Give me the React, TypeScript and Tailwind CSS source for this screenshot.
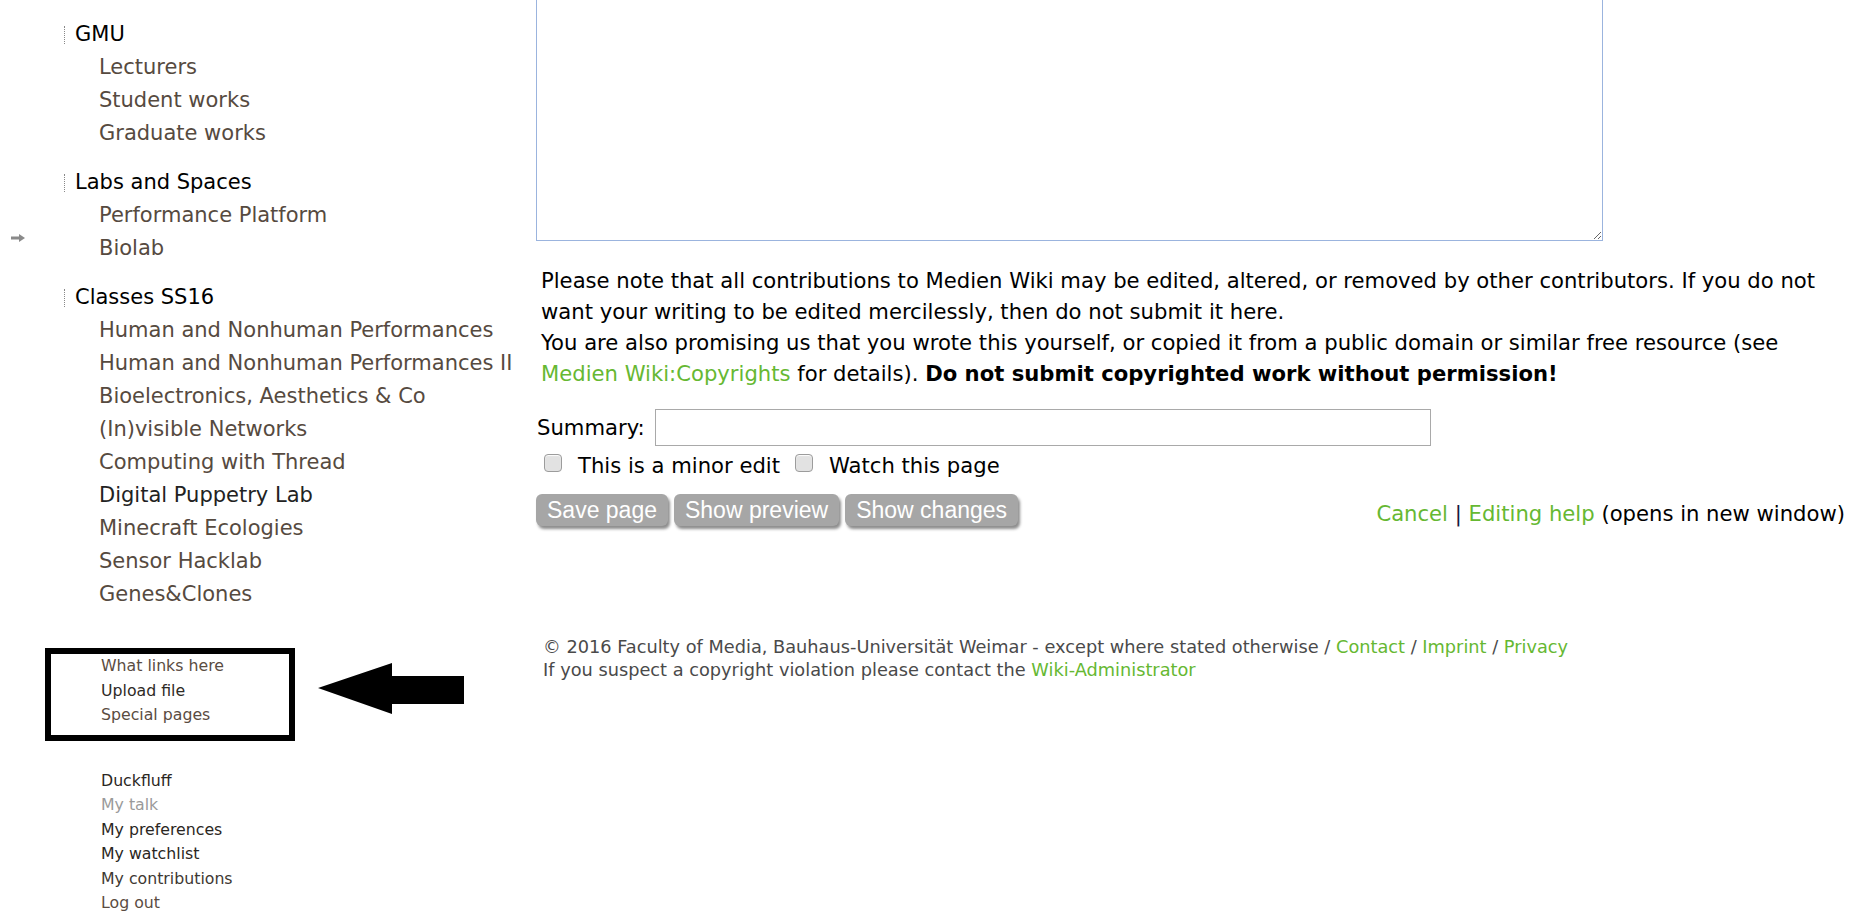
import React from 'react';

const sections = [
  { title: 'GMU', items: ['Lecturers', 'Student works', 'Graduate works'] },
  { title: 'Labs and Spaces', items: ['Performance Platform', 'Biolab'] },
  {
    title: 'Classes SS16',
    items: [
      'Human and Nonhuman Performances',
      'Human and Nonhuman Performances II',
      'Bioelectronics, Aesthetics & Co',
      '(In)visible Networks',
      'Computing with Thread',
      'Digital Puppetry Lab',
      'Minecraft Ecologies',
      'Sensor Hacklab',
      'Genes&Clones',
    ],
  },
];

const tools = [
  { label: 'What links here', color: 'text-[#5a4c42]' },
  { label: 'Upload file', color: 'text-[#2e2a26]' },
  { label: 'Special pages', color: 'text-[#5a4c42]' },
];

const personal = [
  { label: 'Duckfluff', color: 'text-[#2a2622]' },
  { label: 'My talk', color: 'text-[#9a9a9a]' },
  { label: 'My preferences', color: 'text-[#2a2622]' },
  { label: 'My watchlist', color: 'text-[#2a2622]' },
  { label: 'My contributions', color: 'text-[#3e3832]' },
  { label: 'Log out', color: 'text-[#5a4c42]' },
];

const Sidebar: React.FC = () => {
  return (
    <aside className="w-[536px] shrink-0 pt-[18px] text-[21px]">
      {sections.map((s, i) => (
        <div key={s.title} className={i ? 'mt-[16px]' : ''}>
          <div className="flex h-[33px] items-center pl-[64px]">
            <span className="h-[18px] border-l border-dotted border-[#888]" />
            <span className="ml-[10px] text-black">{s.title}</span>
          </div>
          <ul className="pl-[99px]">
            {s.items.map((item) => (
              <li
                key={item}
                className={`leading-[33px] whitespace-nowrap ${
                  item === 'Digital Puppetry Lab' ? 'text-[#222]' : 'text-[#564a40]'
                }`}
              >
                <a href="#">{item}</a>
              </li>
            ))}
          </ul>
        </div>
      ))}

      <div className="mt-[37px] ml-[45px] h-[93px] w-[250px] border-[6px] border-black pl-[50px] text-[15.75px] leading-[24.5px]">
        <ul>
          {tools.map((t) => (
            <li key={t.label} className={t.color}>
              <a href="#">{t.label}</a>
            </li>
          ))}
        </ul>
      </div>

      <ul className="mt-[28px] pl-[101px] text-[15.75px] leading-[24.4px]">
        {personal.map((p) => (
          <li key={p.label} className={p.color}>
            <a href="#">{p.label}</a>
          </li>
        ))}
      </ul>
    </aside>
  );
};

const Checkbox: React.FC = () => (
  <input
    type="checkbox"
    className="mb-[6px] h-[18px] w-[18px] appearance-none rounded-[4px] border border-[#9c9c9c] bg-[#e2e2e2] shadow-[inset_0_1px_1px_rgba(255,255,255,0.9)]"
  />
);

const EditButton: React.FC<{ label: string }> = ({ label }) => (
  <button className="h-[32px] rounded-[6px] bg-[#a6a6a6] px-[11px] font-['Liberation_Sans',Arial,sans-serif] text-[23px] leading-[30px] text-white shadow-[2px_3px_3px_rgba(0,0,0,0.45)]">
    {label}
  </button>
);

const App: React.FC = () => {
  return (
    <div className="relative flex h-[916px] w-full overflow-hidden bg-white font-['DejaVu_Sans',Verdana,sans-serif] text-[21.15px] text-black">
      {/* collapse arrow in the left gutter */}
      <svg className="absolute left-[11px] top-[234px]" width="14" height="8" viewBox="0 0 14 8">
        <rect x="0" y="2.5" width="8" height="3" fill="#8a8a8a" />
        <polygon points="8,0 14,4 8,8" fill="#8a8a8a" />
      </svg>

      {/* annotation arrow */}
      <svg className="absolute left-[318px] top-[662px]" width="148" height="54" viewBox="0 0 148 54">
        <polygon points="0,26 74,1 74,14 146,14 146,42 74,42 74,52" fill="black" />
      </svg>

      <Sidebar />

      <main className="flex-1 pr-[19px]">
        <textarea className="block h-[241px] w-[1067px] resize border border-t-0 border-[#9bb4de] bg-white outline-none" />

        <p className="mt-[24px] whitespace-nowrap pl-[5px] leading-[31px]">
          Please note that all contributions to Medien Wiki may be edited, altered, or removed by other contributors. If you do not
          <br />
          want your writing to be edited mercilessly, then do not submit it here.
          <br />
          You are also promising us that you wrote this yourself, or copied it from a public domain or similar free resource (see
          <br />
          <a href="#" className="text-[#66b832]">
            Medien Wiki:Copyrights
          </a>{' '}
          for details). <strong className="font-bold">Do not submit copyrighted work without permission!</strong>
        </p>

        <div className="mt-[20px] flex h-[37px] items-center pl-[1px]">
          <label>Summary:</label>
          <input type="text" className="ml-[10px] h-[37px] w-[776px] border border-[#a9a9a9] bg-white outline-none" />
        </div>

        <div className="mt-[4px] flex h-[31px] items-center pl-[8px]">
          <Checkbox />
          <span className="ml-[16px]">This is a minor edit</span>
          <span className="ml-[15px] flex items-center">
            <Checkbox />
          </span>
          <span className="ml-[16px]">Watch this page</span>
        </div>

        <div className="mt-[9px] flex items-center justify-between">
          <div className="flex gap-[6px]">
            <EditButton label="Save page" />
            <EditButton label="Show preview" />
            <EditButton label="Show changes" />
          </div>
          <span className="mt-[8px] whitespace-nowrap">
            <a href="#" className="text-[#66b832]">
              Cancel
            </a>{' '}
            <span className="text-[#1a1a40]">|</span>{' '}
            <a href="#" className="text-[#66b832]">
              Editing help
            </a>{' '}
            (opens in new window)
          </span>
        </div>

        <footer className="mt-[106px] pl-[7px] text-[17.75px] leading-[23px] text-[#4a4a4a]">
          <p className="whitespace-nowrap">
            © 2016 Faculty of Media, Bauhaus-Universität Weimar - except where stated otherwise /{' '}
            <a href="#" className="text-[#66b832]">Contact</a> /{' '}
            <a href="#" className="text-[#66b832]">Imprint</a> /{' '}
            <a href="#" className="text-[#66b832]">Privacy</a>
          </p>
          <p className="whitespace-nowrap">
            If you suspect a copyright violation please contact the{' '}
            <a href="#" className="text-[#66b832]">Wiki-Administrator</a>
          </p>
        </footer>
      </main>
    </div>
  );
};

export default App;
